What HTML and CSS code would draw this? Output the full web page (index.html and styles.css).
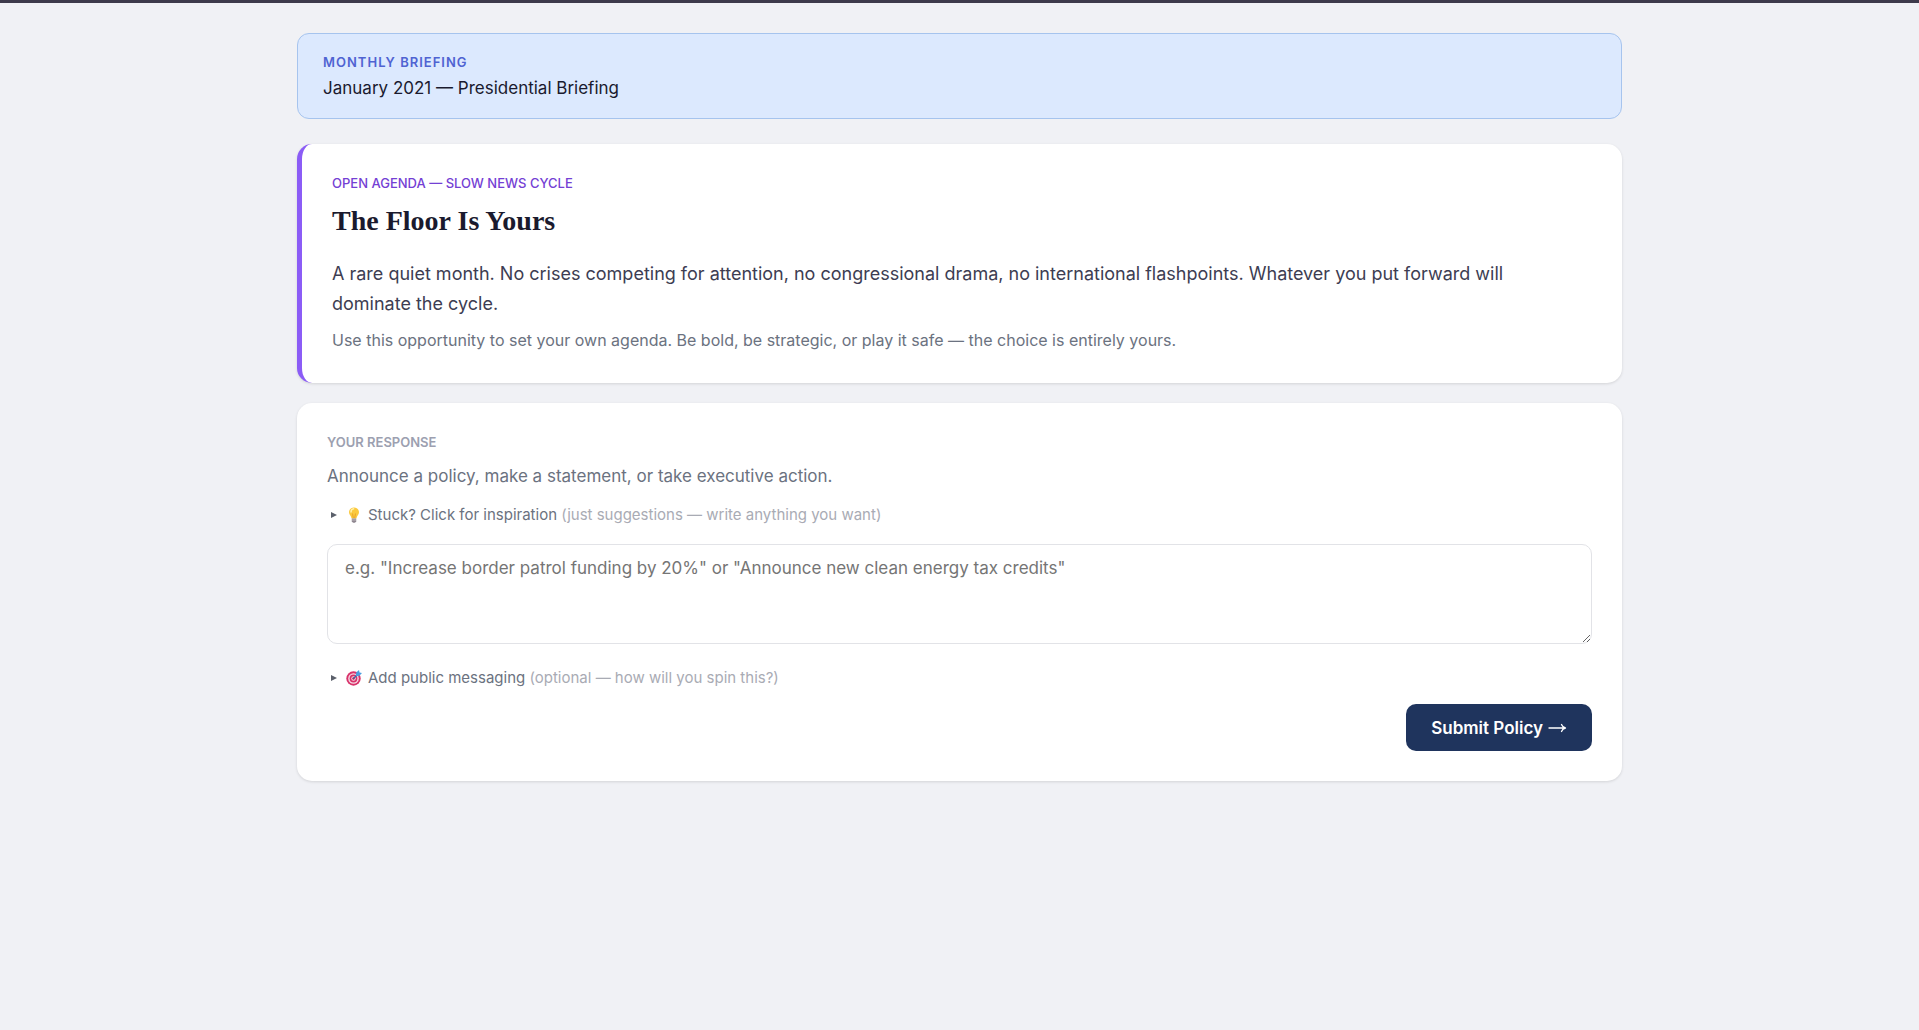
FILE: index.html
```html
<!DOCTYPE html>
<html lang="en">
<head>
    <meta charset="UTF-8">
    <meta name="viewport" content="width=device-width, initial-scale=1.0">
    <title>Presidential Briefing</title>
    <link rel="stylesheet" href="styles.css">
</head>
<body>
    <main class="container">
        <!-- Month banner -->
        <header class="banner">
            <div class="banner-label">Monthly Briefing</div>
            <div class="banner-title">January 2021 — Presidential Briefing</div>
        </header>

        <!-- Current event -->
        <section class="card event-card">
            <div class="event-label">Open Agenda — Slow News Cycle</div>
            <h1>The Floor Is Yours</h1>
            <p class="event-text">A rare quiet month. No crises competing for attention, no congressional drama, no international flashpoints. Whatever you put forward will dominate the cycle.</p>
            <p class="event-note">Use this opportunity to set your own agenda. Be bold, be strategic, or play it safe — the choice is entirely yours.</p>
        </section>

        <!-- Response form -->
        <form class="card response-card">
            <div class="response-label">Your Response</div>
            <label class="response-hint" for="policy">Announce a policy, make a statement, or take executive action.</label>

            <details>
                <summary>
                    <svg class="emoji" viewBox="0 0 16 16" aria-hidden="true">
                        <path d="M8 0.5C4.9 0.5 3 2.7 3 5.3c0 2.4 2.2 3.8 2.6 6.2h4.8C10.8 9.1 13 7.7 13 5.3 13 2.7 11.1 0.5 8 0.5z" fill="#fbc93d"/>
                        <path d="M5 5c0-1.8 1-3 2.6-3.3" stroke="#fff0a8" stroke-width="1.5" fill="none" stroke-linecap="round"/>
                        <path d="M6.5 6.5L7.3 11M9.5 6.5L8.7 11" stroke="#e59a23" stroke-width="0.8" fill="none"/>
                        <path d="M5.8 11.5h4.4v2.7L9 15.7H7l-1.2-1.5z" fill="#8f8790"/>
                        <path d="M5.8 13h4.4" stroke="#c9c2c9" stroke-width="0.8"/>
                    </svg>
                    <span>Stuck? Click for inspiration <span class="muted">(just suggestions — write anything you want)</span></span>
                </summary>
            </details>

            <textarea id="policy" placeholder='e.g. "Increase border patrol funding by 20%" or "Announce new clean energy tax credits"'></textarea>

            <details>
                <summary>
                    <svg class="emoji" viewBox="0 0 16 16" aria-hidden="true">
                        <circle cx="7.5" cy="8.5" r="7.2" fill="#d8336b"/>
                        <circle cx="7.5" cy="8.5" r="5.3" fill="#f5dbe5"/>
                        <circle cx="7.5" cy="8.5" r="3.9" fill="#d8336b"/>
                        <circle cx="7.5" cy="8.5" r="2.2" fill="#f5dbe5"/>
                        <circle cx="7.5" cy="8.5" r="1.2" fill="#b32050"/>
                        <path d="M7.5 8.5L12 4" stroke="#2a6dad" stroke-width="1.1"/>
                        <path d="M9.8 6.2L10.2 2.6 13 0l0.5 2.4 2.5 0.6-2.7 2.8z" fill="#4a9fe0"/>
                    </svg>
                    <span>Add public messaging <span class="muted">(optional — how will you spin this?)</span></span>
                </summary>
            </details>

            <div class="actions">
                <button type="submit">
                    Submit Policy
                    <svg class="arrow" viewBox="0 0 19 10" aria-hidden="true">
                        <path d="M1 5h16.500M13.500 1.500c0.700 1.900 2 3.100 4 3.500-2 0.400-3.300 1.600-4 3.500" fill="none" stroke="#fff" stroke-width="1.300" stroke-linecap="round"/>
                    </svg>
                </button>
            </div>
        </form>
    </main>
</body>
</html>
```
FILE: styles.css
```css
* {
    box-sizing: border-box;
}

body {
    margin: 0;
    border-top: 3px solid #3d3a4b;
    background-color: #f0f1f5;
    color: #1a1a2e;
    font-family: "Inter", sans-serif;
    font-size: 17px;
    line-height: 24px;
}

.container {
    max-width: 1325px;
    margin: 0 auto;
    padding: 30px 0;
}

.banner {
    margin-bottom: 25px;
    padding: 16px 25px;
    background-color: #dce9fe;
    border: 1px solid #a6c4ee;
    border-radius: 12px;
}

.banner-label {
    color: #4f63d2;
    font-size: 13px;
    font-weight: 600;
    letter-spacing: 1px;
    text-transform: uppercase;
}

.banner-title {
    line-height: 28px;
}

.card {
    padding: 30px;
    background-color: #fff;
    border-radius: 15px;
    box-shadow: 0 1px 3px rgba(0, 0, 0, 0.12);
}

.event-card {
    margin-bottom: 20px;
    border-left: 5px solid #8b5cf6;
}

.event-label {
    color: #7440d4;
    font-size: 13px;
    font-weight: 500;
    line-height: 18px;
    text-transform: uppercase;
}

h1 {
    margin: 9px 0 18px;
    font-family: "Liberation Serif", serif;
    font-size: 28px;
    font-weight: 700;
    line-height: 40px;
}

.event-text {
    margin: 0 0 8px;
    padding-right: 30px;
    color: #3d3d52;
    font-size: 18px;
    line-height: 30px;
}

.event-note {
    margin: 0;
    color: #6b7280;
    font-size: 16px;
    line-height: 26px;
}

.response-label {
    color: #9ca0b0;
    font-size: 13px;
    font-weight: 600;
    line-height: 18px;
    text-transform: uppercase;
}

.response-hint {
    display: block;
    margin: 11px 0 13px;
    color: #6b7280;
    line-height: 28px;
}

summary {
    display: flex;
    align-items: center;
    padding-left: 4px;
    color: #6b7280;
    font-size: 15px;
    line-height: 24px;
    list-style: none;
    cursor: pointer;
}

summary::before {
    content: "";
    margin-right: 9px;
    border-left: 6px solid #5b606b;
    border-top: 3px solid transparent;
    border-bottom: 3px solid transparent;
}

.emoji {
    width: 16px;
    height: 16px;
    margin-right: 6px;
}

.muted {
    color: #a9abb4;
}

textarea {
    display: block;
    width: 100%;
    height: 100px;
    margin: 17px 0 22px;
    padding: 10px 17px;
    border: 1px solid #e2e3e7;
    border-radius: 10px;
    font-family: inherit;
    font-size: 17px;
    line-height: 26px;
    resize: vertical;
}

textarea::placeholder {
    color: #757575;
}

.actions {
    display: flex;
    justify-content: flex-end;
    margin-top: 14px;
}

button {
    display: flex;
    align-items: center;
    gap: 5px;
    padding: 12px 25px 11px;
    background-color: #1f345d;
    border: none;
    border-radius: 10px;
    color: #fff;
    font-family: inherit;
    font-size: 17px;
    font-weight: 600;
    line-height: 24px;
    cursor: pointer;
}

button:hover {
    background-color: #2a4478;
}

.arrow {
    width: 19px;
    height: 10px;
}
```
